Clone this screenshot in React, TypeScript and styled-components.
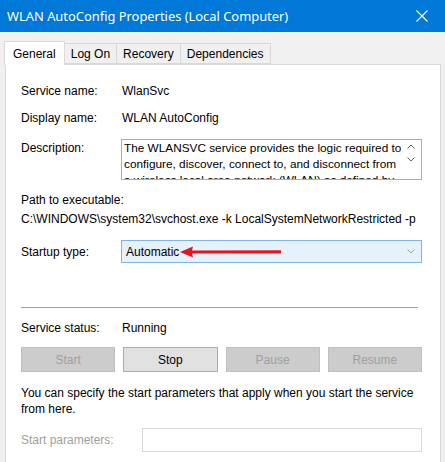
import * as React from "react";
import styled, { createGlobalStyle } from "styled-components";

const GlobalStyle = createGlobalStyle`
  html, body {
    margin: 0;
    padding: 0;
    background: #f0f0f0;
  }
  * {
    box-sizing: border-box;
  }
`;

const Window = styled.div`
  width: 445px;
  height: 462px;
  overflow: hidden;
  display: flex;
  flex-direction: column;
  background: #f0f0f0;
  font-family: "Liberation Sans", Arial, sans-serif;
  font-size: 12px;
  color: #000;
`;

const TitleBar = styled.div`
  height: 32px;
  flex: none;
  display: flex;
  align-items: center;
  justify-content: space-between;
  padding-left: 7px;
  background: #0078d7;
  color: #fff;
  font-family: "Noto Sans", "Open Sans", sans-serif;
  font-size: 12.9px;
`;

const CloseButton = styled.div`
  width: 46px;
  height: 32px;
  display: flex;
  align-items: center;
  justify-content: center;
`;

const TabStrip = styled.div`
  display: flex;
  align-items: flex-end;
  height: 23px;
  margin-top: 9px;
  padding-left: 5px;
  position: relative;
  z-index: 1;
`;

const Tab = styled.div<{ $active?: boolean }>`
  height: ${(p) => (p.$active ? "24px" : "21px")};
  margin-bottom: ${(p) => (p.$active ? "-1px" : "0")};
  padding: 0 ${(p) => (p.$active ? "8px" : "6px")};
  display: flex;
  align-items: center;
  background: ${(p) => (p.$active ? "#fff" : "#f0f0f0")};
  border: 1px solid #d9d9d9;
  border-bottom: ${(p) => (p.$active ? "none" : "1px solid #d9d9d9")};
  margin-left: -1px;
`;

const Panel = styled.div`
  flex: 1;
  margin: 0 4px 0 5px;
  background: #fff;
  border: 1px solid #d9d9d9;
  border-bottom: none;
  padding: 12px 18px 0 15px;
  display: flex;
  flex-direction: column;
`;

const InfoRow = styled.div<{ $top?: boolean }>`
  display: grid;
  grid-template-columns: 101px 1fr;
  align-items: ${(p) => (p.$top ? "start" : "center")};
  min-height: 27px;
`;

const Label = styled.div<{ $dim?: boolean }>`
  color: ${(p) => (p.$dim ? "#a0a0a0" : "#000")};
`;

const TopLabel = styled(Label)`
  padding-top: 2px;
`;

const DescriptionRow = styled(InfoRow)`
  margin-top: 8px;
`;

const DescriptionBox = styled.div`
  position: relative;
  height: 41px;
  margin-left: -1px;
  border: 1px solid #abadb3;
  overflow: hidden;
  padding: 0 0 0 2px;
  line-height: 16px;
  font-size: 11.8px;
  white-space: nowrap;
`;

const ScrollArrows = styled.div`
  position: absolute;
  top: 4px;
  right: 0;
  bottom: 0;
  width: 20px;
  display: flex;
  flex-direction: column;
  align-items: center;
  gap: 8px;
  background: #fff;
`;

const PathBlock = styled.div`
  margin-top: 11px;
  line-height: 19px;
`;

const Dropdown = styled.div`
  position: relative;
  height: 23px;
  margin-left: -1px;
  display: flex;
  align-items: center;
  justify-content: space-between;
  padding: 0 6px 0 4px;
  background: #e5f1fb;
  border: 1px solid #7eb4ea;
`;

const Arrow = styled.svg`
  position: absolute;
  left: 56px;
  top: 5px;
`;

const StartupRow = styled(InfoRow)`
  margin-top: 9px;
`;

const Separator = styled.div`
  margin: 42px 4px 0 0;
  height: 1px;
  background: #a0a0a0;
`;

const StatusRow = styled(InfoRow)`
  margin-top: 10px;
  min-height: 19px;
`;

const ButtonRow = styled.div`
  display: grid;
  grid-template-columns: repeat(4, 1fr);
  column-gap: 8px;
  margin-top: 10px;
`;

const ActionButton = styled.div<{ $enabled?: boolean }>`
  height: 25px;
  display: flex;
  align-items: center;
  justify-content: center;
  background: ${(p) => (p.$enabled ? "#e1e1e1" : "#cccccc")};
  border: 1px solid ${(p) => (p.$enabled ? "#adadad" : "#bfbfbf")};
  color: ${(p) => (p.$enabled ? "#000" : "#a0a0a0")};
`;

const Note = styled.p`
  margin: 13px 0 0;
  line-height: 16px;
`;

const ParamsRow = styled.div`
  display: grid;
  grid-template-columns: 121px 1fr;
  align-items: center;
  margin-top: 11px;
`;

const ParamsInput = styled.div`
  height: 24px;
  border: 1px solid #d9d9d9;
  background: #fff;
`;

const Chevron = ({ dir, color }: { dir: "up" | "down"; color: string }) => (
  <svg width="8" height="5" viewBox="0 0 8 5">
    <path
      d={dir === "up" ? "M0.5 4.5 L4 1 L7.5 4.5" : "M0.5 0.5 L4 4 L7.5 0.5"}
      fill="none"
      stroke={color}
      strokeWidth="1"
    />
  </svg>
);

const description = [
  "The WLANSVC service provides the logic required to",
  "configure, discover, connect to, and disconnect from",
  "a wireless local area network (WLAN) as defined by",
];

const App: React.FunctionComponent = (): JSX.Element => {
  const buttons = [
    { label: "Start", enabled: false },
    { label: "Stop", enabled: true },
    { label: "Pause", enabled: false },
    { label: "Resume", enabled: false },
  ];
  return (
    <Window>
      <GlobalStyle />
      <TitleBar>
        <span>WLAN AutoConfig Properties (Local Computer)</span>
        <CloseButton>
          <svg width="12" height="12" viewBox="0 0 12 12">
            <path d="M0.5 0.5 L11.5 11.5 M11.5 0.5 L0.5 11.5" stroke="#fff" strokeWidth="1.1" />
          </svg>
        </CloseButton>
      </TitleBar>

      <TabStrip>
        <Tab $active>General</Tab>
        <Tab>Log On</Tab>
        <Tab>Recovery</Tab>
        <Tab>Dependencies</Tab>
      </TabStrip>

      <Panel>
        <InfoRow>
          <Label>Service name:</Label>
          <span>WlanSvc</span>
        </InfoRow>
        <InfoRow>
          <Label>Display name:</Label>
          <span>WLAN AutoConfig</span>
        </InfoRow>
        <DescriptionRow $top>
          <TopLabel>Description:</TopLabel>
          <DescriptionBox>
            {description.map((line) => (
              <div key={line}>{line}</div>
            ))}
            <ScrollArrows>
              <Chevron dir="up" color="#606060" />
              <Chevron dir="down" color="#606060" />
            </ScrollArrows>
          </DescriptionBox>
        </DescriptionRow>

        <PathBlock>
          <div>Path to executable:</div>
          <div>C:\WINDOWS\system32\svchost.exe -k LocalSystemNetworkRestricted -p</div>
        </PathBlock>

        <StartupRow>
          <Label>Startup type:</Label>
          <Dropdown>
            <span>Automatic</span>
            <Chevron dir="down" color="#a0a0a0" />
            <Arrow width="104" height="12" viewBox="0 0 104 12">
              <path d="M2 6 L15 0.5 L14 4.6 L103 4.3 L103 7.4 L14 7.4 L15 11.5 Z" fill="#e8141a" />
            </Arrow>
          </Dropdown>
        </StartupRow>

        <Separator />

        <StatusRow>
          <Label>Service status:</Label>
          <span>Running</span>
        </StatusRow>

        <ButtonRow>
          {buttons.map((b) => (
            <ActionButton key={b.label} $enabled={b.enabled}>
              {b.label}
            </ActionButton>
          ))}
        </ButtonRow>

        <Note>
          You can specify the start parameters that apply when you start the service
          <br />
          from here.
        </Note>

        <ParamsRow>
          <Label $dim>Start parameters:</Label>
          <ParamsInput />
        </ParamsRow>
      </Panel>
    </Window>
  );
};

export default App;
